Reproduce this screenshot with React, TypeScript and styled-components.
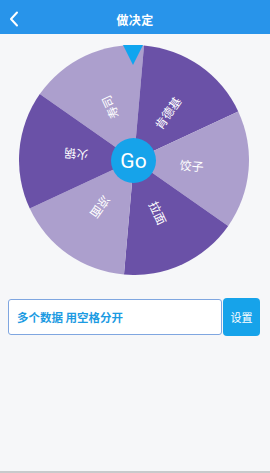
import React from "react";
import styled, { createGlobalStyle } from "styled-components";

const GlobalStyle = createGlobalStyle`
	html, body {
		margin: 0;
		padding: 0;
		background: #f6f7f9;
	}
	body {
		font-family: "Noto Sans CJK SC", "Noto Sans", sans-serif;
	}
`;

const Page = styled.div`
	width: 270px;
	height: 473px;
	box-sizing: border-box;
	background: #f6f7f9;
	border-bottom: 2px solid #c9cacc;
	display: flex;
	flex-direction: column;
`;

const Header = styled.header`
	height: 34px;
	background: #2894ea;
	display: flex;
	align-items: center;
	justify-content: center;
	position: relative;
	color: #fff;
`;

const BackButton = styled.button`
	position: absolute;
	left: 6px;
	top: 10px;
	width: 16px;
	height: 18px;
	padding: 0;
	border: none;
	background: none;
	display: flex;
	align-items: center;
	justify-content: center;
`;

const Title = styled.h1`
	margin: 0;
	padding-top: 4px;
	font-size: 12px;
	font-weight: 700;
	letter-spacing: 0.3px;
`;

const WheelArea = styled.section`
	display: flex;
	justify-content: center;
	padding: 11px 0 0 0;
	margin-left: -2px;
`;

const Wheel = styled.div`
	position: relative;
	width: 230px;
	height: 230px;
`;

const Pointer = styled.div`
	position: absolute;
	top: 0;
	left: 104px;
	width: 0;
	height: 0;
	border-left: 10px solid transparent;
	border-right: 10px solid transparent;
	border-top: 20px solid #0fa5ef;
`;

const GoButton = styled.button`
	position: absolute;
	left: 92px;
	top: 93px;
	width: 45px;
	height: 45px;
	border-radius: 50%;
	border: none;
	padding: 0;
	background: #16a3ea;
	color: #fff;
	font-family: Roboto, "Noto Sans", sans-serif;
	font-size: 21px;
	display: flex;
	align-items: center;
	justify-content: center;
`;

const InputRow = styled.div`
	display: flex;
	align-items: center;
	padding: 23px 10px 0 8px;
	gap: 1px;
`;

const DataInput = styled.div`
	flex: 1;
	height: 36px;
	box-sizing: border-box;
	border: 1px solid #7fa6e0;
	border-radius: 3px;
	background: #fff;
	display: flex;
	align-items: center;
	padding-left: 8px;
	color: #1c9be2;
	font-size: 11.5px;
	font-weight: 700;
	white-space: pre;
`;

const SetButton = styled.button`
	width: 37px;
	height: 38px;
	border: none;
	border-radius: 4px;
	background: #16a3ea;
	color: #fff;
	font-family: "Noto Sans CJK SC", sans-serif;
	font-size: 11px;
	padding: 0;
`;

const items = [
	{ label: "寿司", color: "#ac9fcd" },
	{ label: "肯德基", color: "#6a51a7" },
	{ label: "饺子", color: "#ac9fcd" },
	{ label: "拉面", color: "#6a51a7" },
	{ label: "凉面", color: "#ac9fcd" },
	{ label: "火锅", color: "#6a51a7" },
];

const R = 115;
const OFFSET = -55;

const point = (deg: number, r: number) => {
	const rad = ((deg - 90) * Math.PI) / 180;
	return [R + r * Math.cos(rad), R + r * Math.sin(rad)];
};

const WheelDrawing = () => {
	const step = 360 / items.length;
	return (
		<svg width={230} height={230} viewBox="0 0 230 230">
			{items.map((item, i) => {
				const a0 = OFFSET + i * step;
				const a1 = a0 + step;
				const [x0, y0] = point(a0, R);
				const [x1, y1] = point(a1, R);
				const mid = a0 + step / 2;
				const [tx, ty] = point(mid, 58);
				return (
					<g key={item.label}>
						<path
							d={`M${R} ${R} L${x0} ${y0} A${R} ${R} 0 0 1 ${x1} ${y1} Z`}
							fill={item.color}
						/>
						<text
							x={tx}
							y={ty}
							fill="#fff"
							fontSize={12}
							fontFamily='"Noto Sans CJK SC", sans-serif'
							textAnchor="middle"
							dominantBaseline="central"
							transform={`rotate(${mid - 90} ${tx} ${ty})`}
						>
							{item.label}
						</text>
					</g>
				);
			})}
		</svg>
	);
};

const App = () => {
	return (
		<>
			<GlobalStyle />
			<Page>
				<Header>
					<BackButton>
						<svg width="10" height="16" viewBox="0 0 10 16">
							<path d="M8 1.5 L2 8 L8 14.5" fill="none" stroke="#fff" strokeWidth="2" strokeLinecap="round" strokeLinejoin="round" />
						</svg>
					</BackButton>
					<Title>做决定</Title>
				</Header>
				<WheelArea>
					<Wheel>
						<WheelDrawing />
						<Pointer />
						<GoButton>Go</GoButton>
					</Wheel>
				</WheelArea>
				<InputRow>
					<DataInput>多个数据 用空格分开</DataInput>
					<SetButton>设置</SetButton>
				</InputRow>
			</Page>
		</>
	);
};

export default App;
